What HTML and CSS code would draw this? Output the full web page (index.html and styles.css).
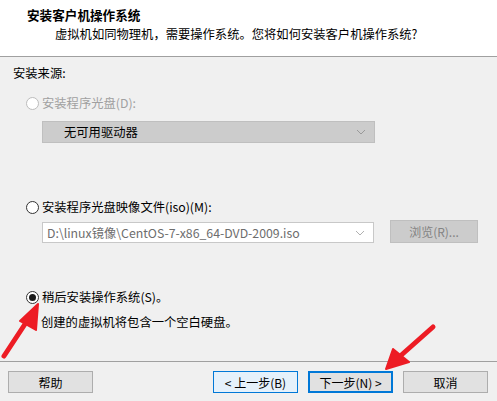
FILE: index.html
```html
<!DOCTYPE html>
<html lang="zh-CN">
<head>
  <meta charset="UTF-8" />
  <meta name="viewport" content="width=device-width, initial-scale=1.0" />
  <title>新建虚拟机向导</title>
  <link rel="stylesheet" href="styles.css">
</head>
<body>
  <div class="wizard">
    <header class="head">
      <div class="head-title">安装客户机操作系统</div>
      <div class="head-sub">虚拟机如同物理机，需要操作系统。您将如何安装客户机操作系统?</div>
    </header>

    <main class="content">
      <div class="group-label">安装来源:</div>

      <label class="radio disabled"><span class="dot"></span>安装程序光盘(D):</label>
      <div class="select disabled">
        <span class="select-text">无可用驱动器</span>
        <svg class="caret" width="10" height="6" viewBox="0 0 10 6"><polyline points="1,1 5,5 9,1" fill="none" stroke="#9a9a9a" stroke-width="1"/></svg>
      </div>

      <label class="radio"><span class="dot"></span>安装程序光盘映像文件(iso)(M):</label>
      <div class="iso-row">
        <div class="combo">
          <span class="combo-text">D:\linux镜像\CentOS-7-x86_64-DVD-2009.iso</span>
          <svg class="caret" width="10" height="6" viewBox="0 0 10 6"><polyline points="1,1 5,5 9,1" fill="none" stroke="#b0b0b0" stroke-width="1"/></svg>
        </div>
        <button class="btn browse" disabled>浏览(R)...</button>
      </div>

      <label class="radio checked"><span class="dot"></span>稍后安装操作系统(S)。</label>
      <p class="note">创建的虚拟机将包含一个空白硬盘。</p>
    </main>

    <footer class="foot">
      <button class="btn">帮助</button>
      <div class="nav">
        <button class="btn hover">&lt; 上一步(B)</button>
        <button class="btn primary">下一步(N) &gt;</button>
        <button class="btn">取消</button>
      </div>
    </footer>

    <!-- flèches rouges d'annotation -->
    <svg class="arrows" width="497" height="401" viewBox="0 0 497 401">
      <g fill="#ed1c24" stroke="#ed1c24" stroke-linecap="round" stroke-linejoin="round">
        <line x1="4" y1="356" x2="29" y2="318" stroke-width="5"/>
        <polygon points="38,304 20,321 36,330" stroke-width="2"/>
        <line x1="433" y1="327" x2="398" y2="358" stroke-width="5"/>
        <polygon points="386,369 393,349 409,362" stroke-width="2"/>
      </g>
    </svg>
  </div>
</body>
</html>
```

FILE: styles.css
```css
* {
  margin: 0;
  padding: 0;
  box-sizing: border-box;
}

body {
  font-family: "Noto Sans CJK SC", "Noto Sans", sans-serif;
  font-size: 12px;
  color: #000;
  background: #f0f0f0;
}

.wizard {
  position: relative;
  width: 497px;
  height: 401px;
  background: #f0f0f0;
  overflow: hidden;
}

.head {
  height: 57px;
  background: #fff;
  border-bottom: 1px solid #a0a0a0;
  padding: 7px 0 0 27px;
}

.head-title {
  font-size: 12.6px;
  font-weight: bold;
  line-height: 16px;
}

.head-sub {
  font-size: 12.3px;
  line-height: 16px;
  margin: 3px 0 0 28px;
}

.content {
  height: 304px;
  padding: 8px 0 0 13px;
  display: flex;
  flex-direction: column;
  align-items: flex-start;
  font-size: 12.3px;
}

.group-label {
  line-height: 16px;
}

.radio {
  display: flex;
  align-items: center;
  line-height: 16px;
  margin-left: 13px;
}

.radio .dot {
  width: 13px;
  height: 13px;
  border: 1px solid #333;
  border-radius: 50%;
  background: #fff;
  margin-right: 3px;
  display: flex;
  align-items: center;
  justify-content: center;
}

.radio.checked .dot::after {
  content: "";
  width: 7px;
  height: 7px;
  border-radius: 50%;
  background: #1a1a1a;
}

.radio.disabled {
  color: #a0a0a0;
}

.radio.disabled .dot {
  border-color: #bcbcbc;
}

.content .radio:nth-of-type(1) {
  margin-top: 14px;
}

.select {
  width: 333px;
  height: 22px;
  margin: 10px 0 0 29px;
  background: #cccccc;
  border: 1px solid #bfbfbf;
  display: flex;
  align-items: center;
  justify-content: space-between;
  padding: 0 8px 0 21px;
}

.content .radio:nth-of-type(2) {
  margin-top: 56px;
}

.iso-row {
  display: flex;
  align-items: flex-end;
  margin: 5px 0 0 29px;
  height: 23px;
}

.combo {
  width: 332px;
  height: 21px;
  background: #fff;
  border: 1px solid #c8c8c8;
  display: flex;
  align-items: center;
  justify-content: space-between;
  padding: 0 8px 0 4px;
  color: #6d6d6d;
}

.btn {
  font-family: inherit;
  font-size: 12px;
  width: 85px;
  height: 22px;
  background: #e1e1e1;
  border: 1px solid #adadad;
  color: #000;
}

.btn.browse {
  width: 88px;
  height: 23px;
  margin-left: 16px;
  background: #cccccc;
  border-color: #bfbfbf;
  color: #838383;
}

.content .radio:nth-of-type(3) {
  margin-top: 46px;
}

.note {
  line-height: 16px;
  margin: 9px 0 0 28px;
}

.foot {
  border-top: 1px solid #a0a0a0;
  padding: 9px 9px 0 8px;
  display: flex;
  justify-content: space-between;
}

.nav {
  display: flex;
  gap: 10px;
}

.btn.hover {
  background: #e5f1fb;
  border-color: #0078d7;
}

.btn.primary {
  border: 2px solid #0078d7;
}

.arrows {
  position: absolute;
  left: 0;
  top: 0;
  pointer-events: none;
}
```
